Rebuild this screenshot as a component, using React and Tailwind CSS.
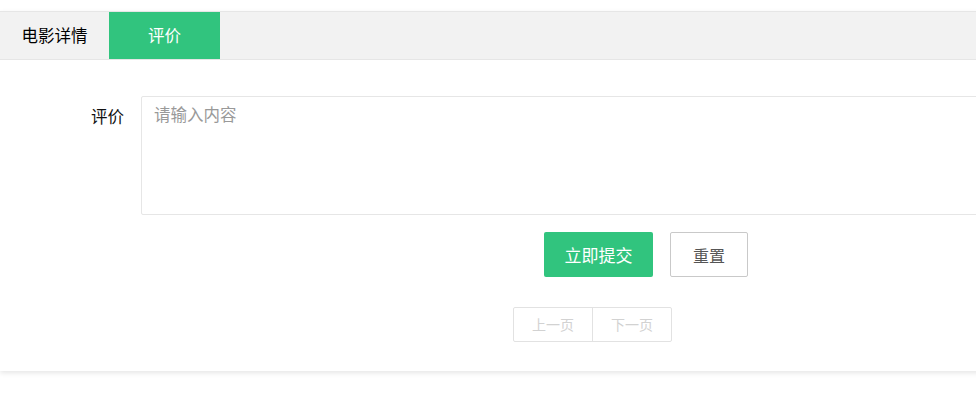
export default function App() {
  const font = { fontFamily: '"Noto Sans CJK SC", "Noto Sans", sans-serif' };
  return (
    <div className="w-[976px] h-[410px] bg-white overflow-hidden" style={font}>
      <div className="pt-[11px]">
        <div className="w-[1000px] border-t border-[#e6e6e6] bg-white shadow-[0_2px_5px_0_rgba(0,0,0,0.1)]">
          <div className="flex h-[48px] bg-[#f2f2f2] border-b border-[#e6e6e6]">
            <div className="w-[109px] flex items-center justify-center text-[16.5px] text-[#000]">电影详情</div>
            <div className="w-[111px] flex items-center justify-center text-[16.5px] text-white bg-[#31c47e]">评价</div>
          </div>
          <div className="pt-[36px] pb-[29px]">
            <div className="flex">
              <div className="w-[124px] pt-[7px] text-right text-[16.5px] leading-[26px] text-[#111]">评价</div>
              <textarea
                placeholder="请输入内容"
                className="ml-[17px] w-[859px] h-[119px] border border-[#e6e6e6] rounded-[2px] px-[12px] py-[4px] text-[16.5px] leading-[26px] text-[#333] placeholder:text-[#999] resize-none outline-none"
                style={font}
              />
            </div>
            <div className="flex mt-[17px] pl-[544px] gap-[17px]">
              <button className="w-[109px] h-[45px] bg-[#31c47e] rounded-[2px] text-white text-[17px]" style={font}>立即提交</button>
              <button className="w-[78px] h-[45px] bg-white border border-[#c9c9c9] rounded-[2px] text-[#555] text-[16px]" style={font}>重置</button>
            </div>
            <div className="flex mt-[30px] pl-[513px]">
              <div className="flex h-[35px] border border-[#e2e2e2] rounded-[2px]">
                <div className="w-[79px] flex items-center justify-center text-[14px] text-[#d2d2d2] border-r border-[#e2e2e2]">上一页</div>
                <div className="w-[78px] flex items-center justify-center text-[14px] text-[#d2d2d2]">下一页</div>
              </div>
            </div>
          </div>
        </div>
      </div>
    </div>
  );
}
